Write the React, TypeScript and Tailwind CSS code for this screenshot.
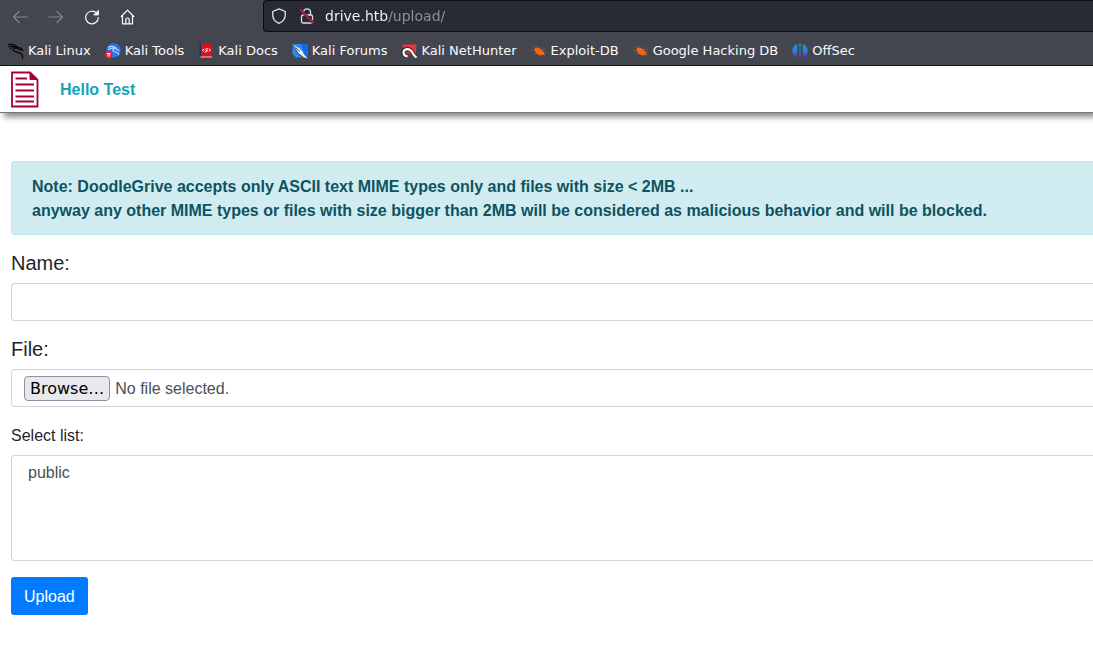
import React, { useState } from "react";

const KaliIcon = () => (
  <svg viewBox="0 0 16 16" className="size-4" fill="none" stroke="#050505" strokeLinecap="round">
    <path d="M0.600 1.600C4 0.700 6.500 1.300 9 3.400M1 3.800C4 2.600 6.500 3 8.500 4" strokeWidth="1.200" />
    <path d="M2.200 5.800C3.500 4.700 5 4.300 7 4.300" strokeWidth="1.100" />
    <path d="M9.500 5C6.500 4.300 4.800 6 5.600 7.800C6.600 9.600 12 8.400 13.600 11.200C14.300 12.600 14.600 14 14.800 15.200" strokeWidth="1.300" />
    <path d="M9 4.600L12.500 4.800L15 7.300L12.300 6.500L10.500 6.200" strokeWidth="1.200" />
  </svg>
);

const ToolsIcon = () => (
  <svg viewBox="0 0 16 16" className="size-4">
    <circle cx="8.500" cy="7.500" r="7.200" fill="#2777f3" />
    <path d="M3 4.500C6 2.800 9 3.200 11.500 5.500M3 6.700C5.500 4.800 8 4.800 11 5.500M10.500 5.800C7 5.800 7 8.500 10 8.700C12.500 9 13.500 10 14 12M11 5.500L14.200 8" fill="none" stroke="#b9d5ff" strokeWidth="1.100" />
    <circle cx="3.700" cy="11.700" r="3.700" fill="#ec1c2b" />
    <path d="M1.800 10.500H5.700M3 10.500V13.600M4.700 10.500V13.600" fill="none" stroke="#fff" strokeWidth="0.900" />
  </svg>
);

const DocsIcon = () => (
  <svg viewBox="0 0 16 16" className="size-4">
    <path d="M1.500 1.500L3.500 0.500V14L1.500 15.500Z" fill="#1b2e6b" />
    <path d="M3 0.500H14V13.500H3Z" fill="#d9101a" />
    <path d="M2.500 13.500H14V15H2.500Z" fill="#eadada" />
    <path d="M2.500 15H14" stroke="#a30d15" />
    <path d="M6.300 5.800L4.500 7.300L6.300 8.800M10.700 5.500L12.500 7L10.700 8.500M10 5.800H8.200L7.600 7L9.400 7.500L8.800 8.800H7" fill="none" stroke="#fff" strokeWidth="0.900" />
  </svg>
);

const ForumsIcon = () => (
  <svg viewBox="0 0 16 16" className="size-4">
    <path d="M0.500 1H15.500V14.500H4L0.500 11Z" fill="#278af5" />
    <path d="M9 1H15.500V14.500H13Z" fill="#1768e8" />
    <path d="M0.500 2L7 5L10.500 8.500L12 11.500L15.500 15.500L10 13.500L5.500 10L4 7Z" fill="#f5f7fa" />
    <path d="M0.500 2L4.500 7.500L6 10.500L11 14M3.500 4.500L8 8.500" fill="none" stroke="#252a35" strokeWidth="0.900" />
  </svg>
);

const NetHunterIcon = () => (
  <svg viewBox="0 0 16 16" className="size-4">
    <path d="M1 1.500H15.500L14.500 13L11 11L3 5Z" fill="#f3303d" />
    <path d="M6 13C1 12.500 1 6.500 6 6C10 5.700 11 8.500 12 10.500C13 12.500 14 13.500 15.500 14.500" fill="none" stroke="#151515" strokeWidth="3.600" />
    <path d="M6.500 13.300C1.500 13 1 7 6 6.200C10 5.900 11 8.800 12 10.700C13 12.500 14 13.500 15.500 14.500" fill="none" stroke="#fff" strokeWidth="2.200" />
    <path d="M4.800 10.700L8 8.700L9.500 11" fill="none" stroke="#ed2937" strokeWidth="1.600" />
  </svg>
);

const BugIcon = () => (
  <svg viewBox="0 0 16 16" className="size-4">
    <path d="M2 3L4.200 5M6 2.500L7.500 5M0.500 7.500L4 8M2.500 11L6 10.500M7 13.500L9 12M10.500 4L11 7L14.500 6M12.500 9.500L15.500 9M12.500 11.500L14.500 13.500" fill="none" stroke="#a8603b" strokeWidth="0.600" />
    <path d="M3.500 5.200C5 3.800 8 4.700 10.500 6.700L12.500 8.700L13.700 11.500L11 12.300C7.500 12.500 3 9.500 3.500 5.200Z" fill="#f36510" />
  </svg>
);

const OffSecIcon = () => (
  <svg viewBox="0 0 16 16" className="size-4">
    <defs>
      <linearGradient id="offsec" gradientUnits="userSpaceOnUse" x1="0" y1="0" x2="0" y2="16">
        <stop offset="0" stopColor="#0ba7b4" />
        <stop offset="0.500" stopColor="#3778d6" />
        <stop offset="1" stopColor="#6a25d3" />
      </linearGradient>
    </defs>
    <path d="M4.800 1C-1.200 3.500-0.800 11 3.500 14C5.200 11 5.800 5 4.800 1ZM6.500 0.500H7.500V15.500L6.300 14C7.200 10 7.200 5 6.500 0.500ZM8.500 0.500H9.500C8.800 5 8.800 10 9.700 14L8.500 15.500ZM11.200 1C17.200 3.500 16.800 11 12.500 14C10.800 11 10.200 5 11.200 1Z" fill="url(#offsec)" />
  </svg>
);

const bookmarks = [
  { label: "Kali Linux", Icon: KaliIcon },
  { label: "Kali Tools", Icon: ToolsIcon },
  { label: "Kali Docs", Icon: DocsIcon },
  { label: "Kali Forums", Icon: ForumsIcon },
  { label: "Kali NetHunter", Icon: NetHunterIcon },
  { label: "Exploit-DB", Icon: BugIcon },
  { label: "Google Hacking DB", Icon: BugIcon },
  { label: "OffSec", Icon: OffSecIcon },
];

const navButtons = [
  { label: "Back", path: "M15 8H1.500M7 2.500L1.500 8L7 13.500", style: "text-[#85868b]" },
  { label: "Forward", path: "M1 8H14.500M9 2.500L14.500 8L9 13.500", style: "text-[#85868b]" },
  { label: "Reload", path: "M12.600 4.200A6.300 6.300 0 1 0 14.300 8.600", style: "text-[#fbfbfe]" },
  { label: "Home", path: "M1.200 7.500L7.500 1.200L13.800 7.500M2.500 7V14.800H12.500V7M5.800 14.800V10.500Q5.800 9 7.500 9Q9.200 9 9.200 10.500V14.800", style: "text-[#fbfbfe]" },
];

function BrowserBar() {
  return (
    <div className="border-b border-[#0c0c0d] bg-[#44464f] font-['DejaVu_Sans',sans-serif] text-[#fbfbfe]">
      <div className="flex h-8 items-center">
        <nav aria-label="History" className="flex w-[263px] shrink-0 gap-5 pl-3 pt-px">
          {navButtons.map(({ label, path, style }) => (
            <button key={label} type="button" aria-label={label} className={style}>
              <svg viewBox="0 0 16 16" className="size-4" fill="none" stroke="currentColor" strokeWidth="1.200" strokeLinejoin="round" strokeLinecap="round">
                <path d={path} />
                {label === "Reload" && <path d="M14.500 1.500V6H10Z" fill="currentColor" strokeWidth="0.800" />}
              </svg>
            </button>
          ))}
        </nav>
        <div className="flex h-8 min-w-0 flex-1 items-center rounded-l border border-r-0 border-[#0c0c0d] bg-[#282a36] pl-[7px]">
          <svg viewBox="0 0 16 16" className="size-4 shrink-0" fill="none" stroke="#e4e4e8" strokeWidth="1.300" strokeLinejoin="round">
            <path d="M8 0.900L14.300 3.500V6.500C14.300 10.800 11.500 14 8 15.300C4.500 14 1.700 10.800 1.700 6.500V3.500Z" />
          </svg>
          <svg viewBox="0 0 16 16" className="ml-3 size-4 shrink-0" fill="none" stroke="#dedee2" strokeWidth="1.300">
            <path d="M4.500 7V4C4.500-0.200 11.500-0.200 11.500 4V7" />
            <rect x="2.500" y="7" width="11" height="8" rx="1.500" />
            <path d="M1.500 2L14.500 15" stroke="#282a36" strokeWidth="2.600" />
            <path d="M1 1.500L14.500 15" stroke="#e4153f" strokeWidth="1.500" />
          </svg>
          <input
            type="text"
            aria-label="Address"
            defaultValue="drive.htb/upload/"
            className="ml-2.5 h-6 min-w-0 flex-1 bg-[linear-gradient(to_right,#fbfbfe_63px,#92939b_63px)] bg-clip-text text-sm text-transparent caret-white outline-none"
          />
        </div>
      </div>
      <nav aria-label="Bookmarks" className="flex h-[33px] items-center gap-3.5 pl-2 pt-1 text-[13px]">
        {bookmarks.map(({ label, Icon }) => (
          <a key={label} href="#" className="flex shrink-0 items-center gap-1 whitespace-nowrap">
            <Icon />
            {label}
          </a>
        ))}
      </nav>
    </div>
  );
}

function SiteHeader() {
  return (
    <header className="flex h-[47px] items-center gap-5 border-b border-[#777] bg-white pl-[10px] pt-px shadow-[4px_4px_6px_#888]">
      <a href="#" aria-label="DoodleGrive">
        <svg viewBox="0 0 30 38" className="h-[38px] w-[30px]" fill="none" stroke="#a50034">
          <path d="M2 1.500H20L27.500 9V35.500H2Z" strokeWidth="1.800" />
          <path d="M20 1V8.500H28Z" fill="#a50034" strokeWidth="1" />
          <path d="M5.500 7.500H17M5.500 13.500H24M5.500 19.500H24M5.500 25.500H24M5.500 30.500H24" strokeWidth="1.800" />
        </svg>
      </a>
      <a href="#" className="font-bold text-[#17a2b8]">Hello Test</a>
    </header>
  );
}

export default function App() {
  const [fileName, setFileName] = useState("No file selected.");
  const pickFile = (e: React.ChangeEvent<HTMLInputElement>) =>
    setFileName(e.target.files?.[0]?.name ?? "No file selected.");

  return (
    <div className="min-h-screen overflow-x-hidden bg-white font-['Liberation_Sans',Arial,sans-serif] text-base text-[#212529]">
      <BrowserBar />
      <SiteHeader />
      <main className="pl-[11px] pt-12">
        <div role="alert" className="mb-4 rounded-l border border-r-0 border-[#bee5eb] bg-[#d1ecf1] px-5 pt-[13px] pb-[11px] font-bold text-[#0c5460]">
          <p>Note: DoodleGrive accepts only ASCII text MIME types only and files with size &lt; 2MB ...</p>
          <p>anyway any other MIME types or files with size bigger than 2MB will be considered as malicious behavior and will be blocked.</p>
        </div>
        <form className="flex flex-col gap-4" onSubmit={(e) => e.preventDefault()}>
          <div className="flex flex-col gap-2">
            <label htmlFor="name" className="text-xl leading-6">Name:</label>
            <input id="name" type="text" className="h-[38px] rounded-l border border-r-0 border-[#ced4da] px-3 text-[#495057]" />
          </div>
          <div className="flex flex-col gap-2">
            <label htmlFor="file" className="text-xl leading-6">File:</label>
            <div className="flex h-[38px] items-center gap-[5px] rounded-l border border-r-0 border-[#ced4da] px-3 text-[#495057]">
              <input id="file" type="file" className="peer sr-only" onChange={pickFile} />
              <label htmlFor="file" className="flex h-[25px] items-center rounded border border-[#8f8f9d] bg-[#e9e9ed] px-[5px] pt-px font-['DejaVu_Sans',sans-serif] text-black peer-focus-visible:outline-2">
                Browse…
              </label>
              <span className="pt-px">{fileName}</span>
            </div>
          </div>
          <div className="flex flex-col gap-[7px]">
            <label htmlFor="visibility" className="pt-px">Select list:</label>
            <select id="visibility" multiple size={4} className="h-[106px] appearance-none overflow-hidden rounded-l border border-r-0 border-[#ced4da] px-3 py-2 text-[#495057]">
              <option value="public" className="px-1">public</option>
            </select>
          </div>
          <button type="submit" className="h-[38px] self-start rounded-[3px] bg-[#007bff] px-[13px] pt-px text-white">Upload</button>
        </form>
      </main>
    </div>
  );
}
